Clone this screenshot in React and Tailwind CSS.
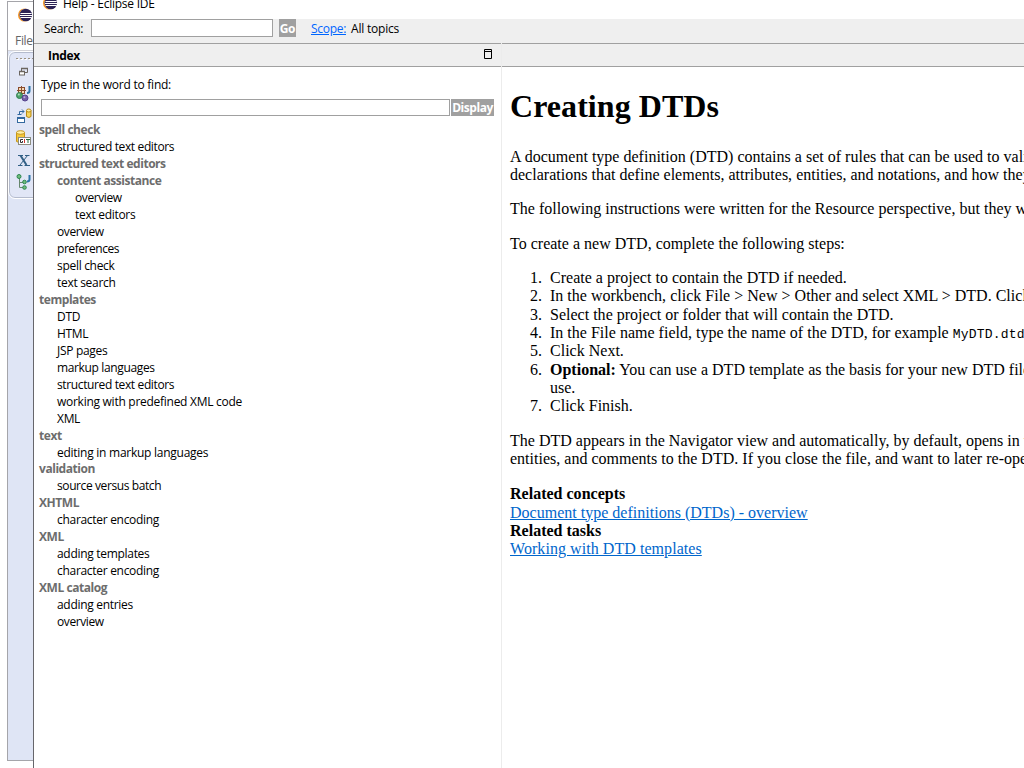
import React from "react";

const TREE = [
  [0, "spell check"],
  [1, "structured text editors"],
  [0, "structured text editors"],
  [1, "content assistance", true],
  [2, "overview"],
  [2, "text editors"],
  [1, "overview"],
  [1, "preferences"],
  [1, "spell check"],
  [1, "text search"],
  [0, "templates"],
  [1, "DTD"],
  [1, "HTML"],
  [1, "JSP pages"],
  [1, "markup languages"],
  [1, "structured text editors"],
  [1, "working with predefined XML code"],
  [1, "XML"],
  [0, "text"],
  [1, "editing in markup languages"],
  [0, "validation"],
  [1, "source versus batch"],
  [0, "XHTML"],
  [1, "character encoding"],
  [0, "XML"],
  [1, "adding templates"],
  [1, "character encoding"],
  [0, "XML catalog"],
  [1, "adding entries"],
  [1, "overview"],
];

const INDENT = ["pl-[5px]", "pl-[23px]", "pl-[41px]"];

const TRACKING = {
  "structured text editors": "tracking-[-0.37px]",
  "working with predefined XML code": "tracking-[-0.27px]",
  "editing in markup languages": "tracking-[-0.26px]",
  "source versus batch": "tracking-[-0.4px]",
  "markup languages": "tracking-[-0.36px]",
  preferences: "tracking-[-0.45px]",
  overview: "tracking-[-0.4px]",
};

const STEPS = [
  <>Create a project to contain the DTD if needed.</>,
  <>In the workbench, click File &gt; New &gt; Other and select XML &gt; DTD. Click Next.</>,
  <>Select the project or folder that will contain the DTD.</>,
  <>
    In the File name field, type the name of the DTD, for example{" "}
    <code className="font-['Liberation_Mono',monospace] text-[13px] leading-none tracking-[0.2px]">MyDTD.dtd</code>.
  </>,
  <>Click Next.</>,
  <>
    <b>Optional:</b> You can use a DTD template as the basis for your new DTD file.
    <br />
    use.
  </>,
  <>Click Finish.</>,
];

function EclipseLogo() {
  return (
    <svg width="15" height="14" viewBox="0 0 15 14" className="block shrink-0">
      <circle cx="6.600" cy="7" r="6.600" fill="#f7941e" />
      <circle cx="8" cy="7" r="6.500" fill="#fff" />
      <circle cx="7.800" cy="7" r="6.300" fill="#2c2255" />
      <path d="M2.500 5.500h11.200M2 7.500h12M2.500 9.500h11.200" stroke="#fff" strokeWidth="1" />
    </svg>
  );
}

function RestoreIcon() {
  return (
    <svg width="16" height="16" viewBox="0 0 16 16" className="block">
      <path d="M5.500 7V4.500h6v4H9M5 4.500h7" fill="none" stroke="#6b6660" />
      <rect x="3.500" y="7.500" width="5" height="3.500" fill="#fff" stroke="#6b6660" />
      <path d="M3 7.500h6M5 4.500h7" stroke="#6b6660" strokeWidth="1.500" />
    </svg>
  );
}

function JavaBrowseIcon() {
  return (
    <svg width="16" height="16" viewBox="0 0 16 16" className="block">
      <rect x="2.500" y="1.500" width="6" height="6" fill="#f3d9b5" stroke="#8a4b2c" />
      <path d="M5.500 0v9M1 4.500h9" stroke="#8a4b2c" />
      <path d="M13.500 0v5q0 2-2.500 2" fill="none" stroke="#2d74a8" strokeWidth="2" />
      <circle cx="3.500" cy="9.500" r="3" fill="#4fa36a" stroke="#2f7d4e" />
      <circle cx="9" cy="12" r="3" fill="#7460a8" stroke="#54438c" />
      <circle cx="2.800" cy="8.600" r="1" fill="#b5dfbd" />
      <circle cx="8.400" cy="11.200" r="1" fill="#bcb0dc" />
    </svg>
  );
}

function DatabaseIcon() {
  return (
    <svg width="16" height="16" viewBox="0 0 16 16" className="block">
      <rect x="1.500" y="9.500" width="7" height="5" fill="#fff" stroke="#34699f" />
      <path d="M1 10h8" stroke="#34699f" strokeWidth="2" />
      <path d="M3.500 7V3.500H8M6 1.500l2 2-2 2M1.500 6.500h4" fill="none" stroke="#34699f" />
      <path d="M10.500 2.500v6q2.500 2 4.500 0v-6" fill="#f7d45a" stroke="#b98a12" />
      <ellipse cx="12.750" cy="2.500" rx="2.250" ry="1.500" fill="#fff0a6" stroke="#b98a12" />
    </svg>
  );
}

function GitIcon() {
  return (
    <svg width="16" height="16" viewBox="0 0 16 16" className="block">
      <path d="M.5 2.500v9q4 3 8 0v-9" fill="#f4c83d" stroke="#c4951c" />
      <ellipse cx="4.500" cy="2.500" rx="4" ry="1.800" fill="#fff0a6" stroke="#c4951c" />
      <rect x="2.500" y="7.500" width="12" height="7" fill="#fff" stroke="#8d8d80" />
      <path d="M7 9.500H4.500v3h2v-1.500" fill="none" stroke="#333" />
      <path d="M8.500 9v4" stroke="#c33" />
      <path d="M10 9.500h4M12 9v4" stroke="#276c42" />
    </svg>
  );
}

function XmlIcon() {
  return (
    <svg width="16" height="16" viewBox="0 0 16 16" className="block">
      <path d="M4.500 3.500l6 9.500" stroke="#315f85" strokeWidth="2" />
      <path d="M11.500 3.500L4 13M2 3.500h5M9 3.500h4.500M2 13.500h4.500M8.500 13.500H14" stroke="#315f85" />
    </svg>
  );
}

function HierarchyIcon() {
  return (
    <svg width="16" height="16" viewBox="0 0 16 16" className="block">
      <path d="M3.500 4v9.500H7M3.500 8.500H7" fill="none" stroke="#66866d" />
      <circle cx="3" cy="2.500" r="2" fill="#70bd7c" stroke="#2c8550" />
      <circle cx="8.500" cy="8" r="1.800" fill="#70bd7c" stroke="#2c8550" />
      <circle cx="8.500" cy="13.500" r="1.800" fill="#70bd7c" stroke="#2c8550" />
      <path d="M13.500 1v4.500q0 2-2.500 2" fill="none" stroke="#2d74a8" strokeWidth="2" />
    </svg>
  );
}

function WorkbenchStrip() {
  return (
    <aside className="mt-px flex h-[760px] w-[26px] shrink-0 flex-col overflow-hidden border-b border-l border-t border-[#a5a5aa] bg-[#dfe5f5]">
      <div className="h-[48px] shrink-0 bg-white">
        <div className="pl-[10px] pt-[6px]">
          <EclipseLogo />
        </div>
        <div className="pl-[7px] pt-[11px] text-[12px] leading-4 text-[#666]">File</div>
      </div>
      <div className="h-px shrink-0 bg-[#d2d2d8]" />
      <div className="ml-px mt-px flex h-[146px] w-[34px] shrink-0 flex-col rounded-[6px] border border-[#b4bbcd] bg-[#e1e6f6] outline outline-white">
        <svg width="20" height="2" viewBox="0 0 20 2" className="ml-[6px] mt-[5px] block">
          <path d="M0 .5h20" stroke="#9b917f" strokeDasharray="2 2" />
          <path d="M1 1.500h20" stroke="#fff" strokeDasharray="2 2" />
        </svg>
        <div className="ml-[6px] mt-[4px] flex flex-col gap-[6px]">
          <RestoreIcon />
          <JavaBrowseIcon />
          <DatabaseIcon />
          <GitIcon />
          <XmlIcon />
          <HierarchyIcon />
        </div>
      </div>
    </aside>
  );
}

function IndexPanel() {
  return (
    <section className="w-[468px] shrink-0 border-r border-[#ececec]">
      <header className="flex h-[24px] items-center justify-between border-y border-[#a0a0a0] bg-[#efefef] pl-[14px] pr-[9px]">
        <h2 className="mt-px text-[12px] font-bold leading-4">Index</h2>
        <svg width="8" height="10" viewBox="0 0 8 10" className="mb-[2px] block">
          <path d="M.5.500h7v9h-7zM0 2.500h8" fill="none" stroke="#000" />
        </svg>
      </header>
      <label className="mt-[9px] block pl-[7px] leading-[18px] tracking-[-0.25px]">Type in the word to find:</label>
      <div className="mt-[5px] flex gap-px pl-[7px]">
        <div className="h-[17px] w-[409px] border border-[#a0a0a0] bg-white" />
        <button className="h-[17px] w-[43px] bg-[#a0a0a0] text-center text-[12px] font-bold leading-[18px] tracking-[-0.45px] text-white">
          Display
        </button>
      </div>
      <ul className="mt-[6.4px]">
        {TREE.map(([depth, label, branch], i) => (
          <li
            key={i}
            className={`h-[16.96px] leading-[16.96px] ${INDENT[depth]} ${
              depth === 0 || branch ? "font-bold tracking-[-0.45px] text-[#6d6d6d]" : TRACKING[label] || ""
            }`}
          >
            {label}
          </li>
        ))}
      </ul>
    </section>
  );
}

function Article() {
  return (
    <article className="w-[522px] shrink-0 overflow-hidden">
      <div className="h-[24px] border-y border-[#a0a0a0] bg-[#efefef]" />
      <div className="w-[900px] whitespace-nowrap pl-[8px] font-['Liberation_Serif',serif] text-[16px] leading-[18.3px] tracking-[0.01px]">
        <h1 className="mt-[21px] text-[32px] font-bold leading-[37px] tracking-[0.05px]">Creating DTDs</h1>
        <p className="mt-[22.8px]">
          A document type definition (DTD) contains a set of rules that can be used to validate an XML file.
          <br />
          declarations that define elements, attributes, entities, and notations, and how they can be used.
        </p>
        <p className="mt-[16px]">
          The following instructions were written for the Resource perspective, but they will also work in others.
        </p>
        <p className="mt-[16px]">To create a new DTD, complete the following steps:</p>
        <ol className="mt-[16.2px]">
          {STEPS.map((step, i) => (
            <li key={i} className="flex">
              <span className="w-[40px] shrink-0 pr-[8px] text-right">{i + 1}.</span>
              <div>{step}</div>
            </li>
          ))}
        </ol>
        <p className="mt-[16.6px]">
          The DTD appears in the Navigator view and automatically, by default, opens in the editor.
          <br />
          entities, and comments to the DTD. If you close the file, and want to later re-open it
        </p>
        <div className="mt-[16.5px]">
          <b>Related concepts</b>
          <br />
          <a className="text-[#0066cc] underline">Document type definitions (DTDs) - overview</a>
          <br />
          <b>Related tasks</b>
          <br />
          <a className="tracking-[0.06px] text-[#0066cc] underline">Working with DTD templates</a>
        </div>
      </div>
    </article>
  );
}

export default function App() {
  return (
    <div className="flex h-[768px] w-[1024px] overflow-hidden bg-white pl-[7px] font-['Open_Sans','Noto_Sans',sans-serif] text-[12px] tracking-[-0.3px] text-black">
      <WorkbenchStrip />
      <main className="flex h-[768px] w-[991px] shrink-0 flex-col overflow-hidden border-l border-[#66666b] bg-white">
        <div className="flex h-[19px] shrink-0 items-start pl-[9px]">
          <div className="-mt-[4px]">
            <EclipseLogo />
          </div>
          <span className="-mt-[5px] ml-[5px] leading-[18px] tracking-[-0.25px]">Help - Eclipse IDE</span>
        </div>
        <div className="flex h-[24px] shrink-0 items-start bg-[#efefef] pl-[10px]">
          <label className="w-[47px] leading-[20px]">Search:</label>
          <div className="h-[18px] w-[182px] border border-[#a0a0a0] bg-white" />
          <button className="ml-[6px] h-[18px] w-[17px] bg-[#a0a0a0] text-center font-bold leading-[19px] text-white">
            Go
          </button>
          <a className="ml-[15px] w-[40px] leading-[20px] text-[#0066ff] underline">Scope:</a>
          <span className="leading-[20px] tracking-[-0.2px]">All topics</span>
        </div>
        <div className="flex min-h-0 flex-1">
          <IndexPanel />
          <Article />
        </div>
      </main>
    </div>
  );
}
